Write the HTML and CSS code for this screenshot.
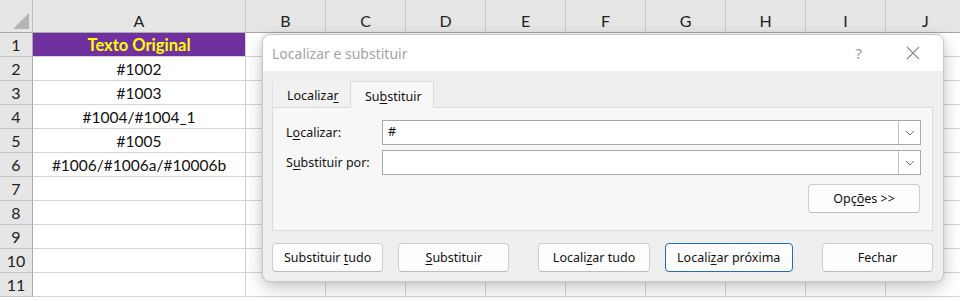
FILE: index.html
```html
<!DOCTYPE html>
<html lang="pt">
<head>
  <meta charset="UTF-8">
  <title>Localizar e substituir</title>
  <link rel="stylesheet" href="styles.css">
</head>
<body>
  <div class="sheet">
    <div class="corner"><span class="tri"></span></div>
    <div class="colhead">A</div>
    <div class="colhead">B</div>
    <div class="colhead">C</div>
    <div class="colhead">D</div>
    <div class="colhead">E</div>
    <div class="colhead">F</div>
    <div class="colhead">G</div>
    <div class="colhead">H</div>
    <div class="colhead">I</div>
    <div class="colhead">J</div>
  </div>

  <div class="sheet-body" id="sheetBody"></div>

  <div class="dialog">
    <div class="titlebar">
      <span class="title">Localizar e substituir</span>
      <span class="help">?</span>
      <svg class="close" width="14" height="14" viewBox="0 0 14 14">
        <path d="M1 1 L13 13 M13 1 L1 13" stroke="#8a8a8a" stroke-width="1.1" fill="none"/>
      </svg>
    </div>
    <div class="dialog-body">
      <div class="tabs">
        <div class="tab">Localiza<u>r</u></div>
        <div class="tab active">Su<u>b</u>stituir</div>
      </div>
      <div class="panel">
        <div class="field">
          <label>L<u>o</u>calizar:</label>
          <div class="combo">
            <span class="value">#</span>
            <span class="drop"><svg width="10" height="6" viewBox="0 0 10 6"><path d="M1 1 L5 5 L9 1" stroke="#707070" stroke-width="1" fill="none"/></svg></span>
          </div>
        </div>
        <div class="field">
          <label>S<u>u</u>bstituir por:</label>
          <div class="combo">
            <span class="value"></span>
            <span class="drop"><svg width="10" height="6" viewBox="0 0 10 6"><path d="M1 1 L5 5 L9 1" stroke="#707070" stroke-width="1" fill="none"/></svg></span>
          </div>
        </div>
        <div class="options-row">
          <button class="btn">Opç<u>õ</u>es &gt;&gt;</button>
        </div>
      </div>
      <div class="actions">
        <button class="btn">Substituir <u>t</u>udo</button>
        <button class="btn gap-s"><u>S</u>ubstituir</button>
        <button class="btn gap-l">Locali<u>z</u>ar tudo</button>
        <button class="btn default gap-s">Locali<u>z</u>ar próxima</button>
        <button class="btn gap-l">Fechar</button>
      </div>
    </div>
  </div>

  <script>
    const cells = [
      ['Texto Original', 'head'],
      ['#1002'],
      ['#1003'],
      ['#1004/#1004_1'],
      ['#1005'],
      ['#1006/#1006a/#10006b']
    ];

    const body = document.getElementById('sheetBody');
    for (let r = 1; r <= 11; r++) {
      const row = document.createElement('div');
      row.className = 'row';
      const num = document.createElement('div');
      num.className = 'rowhead';
      num.textContent = r;
      row.appendChild(num);
      for (let c = 0; c < 10; c++) {
        const cell = document.createElement('div');
        cell.className = c === 0 ? 'cell col-a' : 'cell';
        if (c === 0 && cells[r - 1]) {
          cell.textContent = cells[r - 1][0];
          if (cells[r - 1][1]) cell.classList.add('title-cell');
        }
        row.appendChild(cell);
      }
      body.appendChild(row);
    }
  </script>
</body>
</html>
```
FILE: styles.css
```css
body {
  margin: 0;
  background: #fff;
  font-family: 'Lato', 'Open Sans', sans-serif;
  overflow: hidden;
  width: 960px;
  height: 301px;
  position: relative;
}

.sheet,
.row {
  display: grid;
  grid-template-columns: 33px 213px repeat(9, 80px);
}

.sheet {
  height: 33px;
  background: #e6e6e6;
  border-bottom: 1px solid #a9a9a9;
  box-sizing: border-box;
}

.corner {
  position: relative;
  border-right: 1px solid #bdbdbd;
}

.corner .tri {
  position: absolute;
  right: 3px;
  bottom: 3px;
  width: 0;
  height: 0;
  border-left: 16px solid transparent;
  border-bottom: 16px solid #b4b4b4;
}

.colhead {
  display: flex;
  align-items: flex-end;
  justify-content: center;
  padding-bottom: 2px;
  font-size: 16px;
  color: #222;
  border-right: 1px solid #c6c6c6;
}

.row {
  height: 24px;
}

.rowhead {
  background: #e6e6e6;
  border-right: 1px solid #a9a9a9;
  border-bottom: 1px solid #c6c6c6;
  font-size: 16px;
  color: #222;
  display: flex;
  align-items: center;
  justify-content: center;
}

.cell {
  border-right: 1px solid #d4d4d4;
  border-bottom: 1px solid #d4d4d4;
  font-size: 15.5px;
  color: #111;
  display: flex;
  align-items: center;
  justify-content: center;
  white-space: nowrap;
}

.title-cell {
  background: #7030a0;
  color: #ffff00;
  font-weight: bold;
  font-size: 16.5px;
}

/* dialog */
.dialog {
  position: absolute;
  left: 262px;
  top: 34px;
  width: 682px;
  height: 248px;
  background: #efefef;
  border: 1px solid #c9c9c9;
  border-radius: 8px;
  box-sizing: border-box;
  box-shadow: 0 6px 18px rgba(0, 0, 0, 0.22), 0 0 4px rgba(0, 0, 0, 0.08);
  font-family: 'Noto Sans', 'Open Sans', sans-serif;
  font-size: 12.5px;
  color: #111;
  overflow: hidden;
}

.titlebar {
  height: 36px;
  background: #fff;
  display: flex;
  align-items: center;
  padding-left: 9px;
}

.title {
  font-size: 14px;
  color: #a3a3a3;
  flex: 1;
}

.help {
  font-size: 15px;
  color: #9a9a9a;
  margin-right: 44px;
}

.close {
  margin-right: 23px;
}

.dialog-body {
  padding: 9px 10px 0 9px;
}

.tabs {
  display: flex;
  align-items: flex-end;
  height: 27px;
}

.tab {
  height: 25px;
  padding: 0 14px 0 14px;
  display: flex;
  align-items: center;
  padding-top: 2px;
  box-sizing: border-box;
  border-left: 1px solid #e2e2e2;
  background: #f1f1f1;
  width: 78px;
}

.tab.active {
  height: 27px;
  width: 84px;
  background: #f7f7f7;
  border: 1px solid #dcdcdc;
  border-bottom: none;
  padding-left: 14px;
  position: relative;
  top: 1px;
}

.panel {
  height: 124px;
  background: #f7f7f7;
  border: 1px solid #dcdcdc;
  box-sizing: border-box;
  padding: 12px 11px 0 13px;
}

.field {
  display: flex;
  align-items: center;
  margin-bottom: 5px;
}

.field label {
  width: 96px;
}

.combo {
  flex: 1;
  height: 25px;
  background: #fff;
  border: 1px solid #a8a8a8;
  box-sizing: border-box;
  display: flex;
}

.combo .value {
  flex: 1;
  padding-left: 5px;
  line-height: 22px;
}

.drop {
  width: 21px;
  border-left: 1px solid #c4c4c4;
  display: flex;
  align-items: center;
  justify-content: center;
}

.options-row {
  display: flex;
  justify-content: flex-end;
  margin-top: 9px;
  padding-right: 1px;
}

.btn {
  width: 112px;
  height: 29px;
  background: #fdfdfd;
  border: 1px solid #cfcfcf;
  border-bottom-color: #bdbdbd;
  border-radius: 4px;
  font-family: inherit;
  font-size: 12.5px;
  color: #111;
  padding: 0;
}

.btn.default {
  width: 129px;
  border: 1px solid #1f6fc0;
}

.actions {
  display: flex;
  margin-top: 12px;
}

.gap-s {
  margin-left: 15px;
}

.gap-l {
  margin-left: 29px;
}

u {
  text-underline-offset: 2px;
}
```
